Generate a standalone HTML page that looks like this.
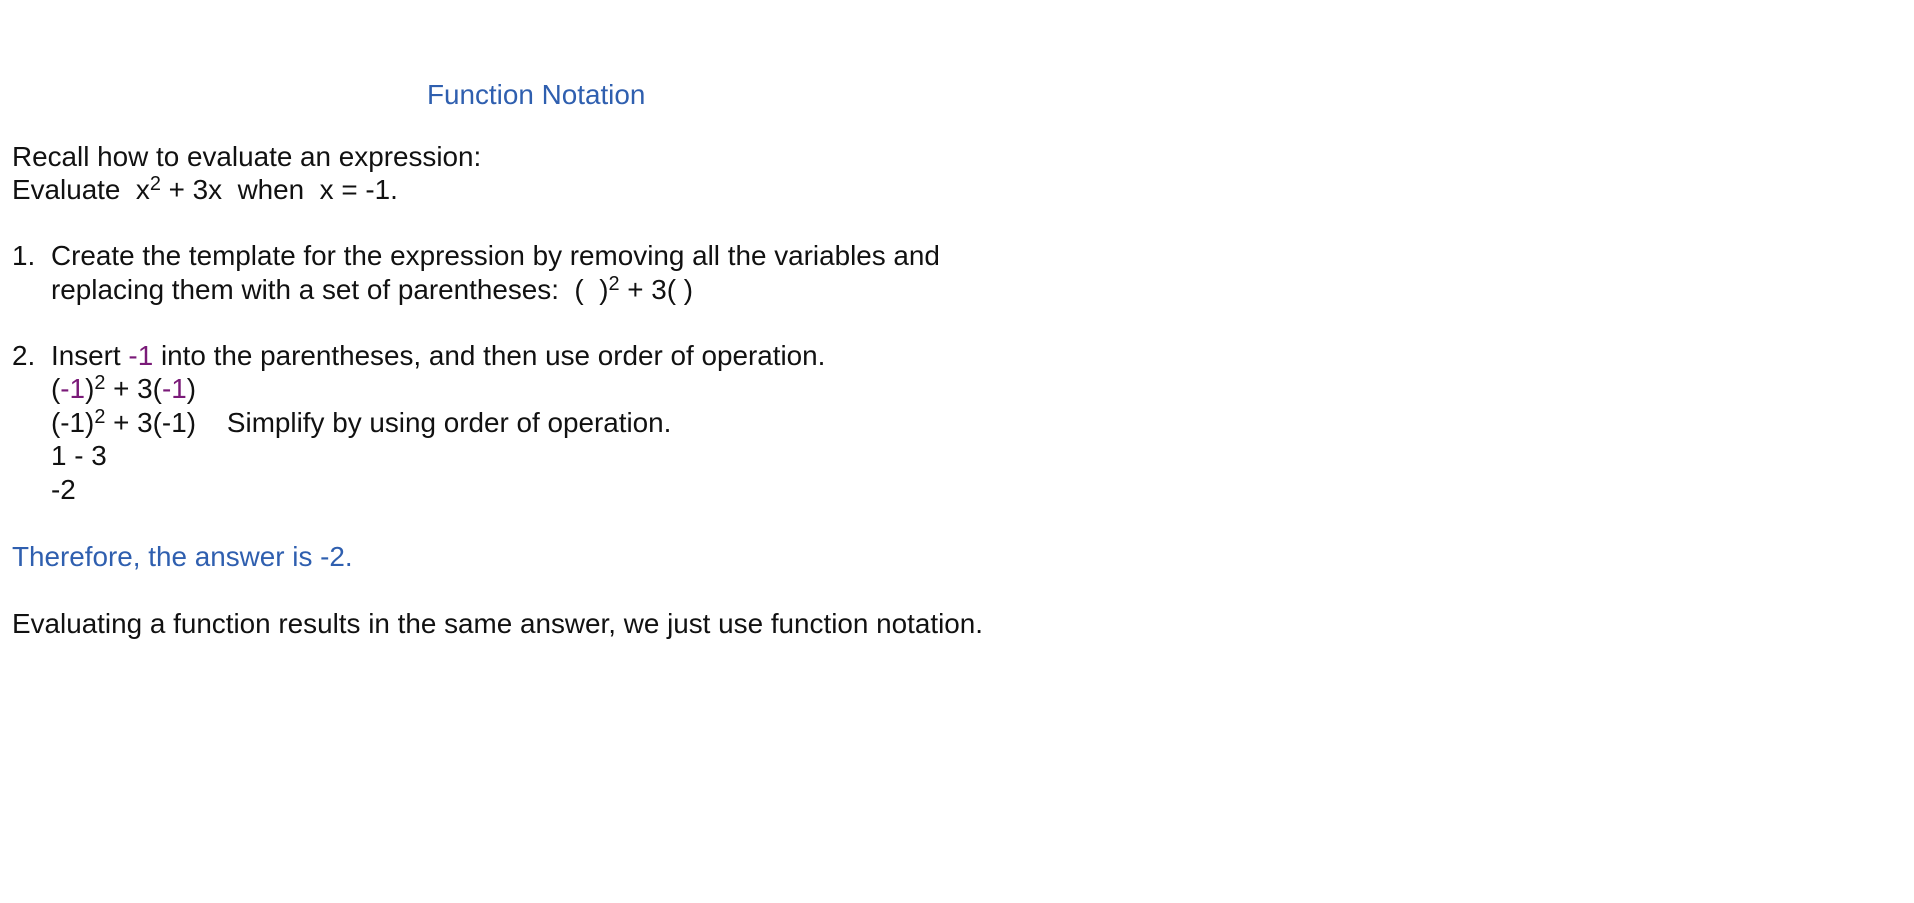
<!DOCTYPE html>
<html><head><meta charset="utf-8"><style>
html,body{margin:0;padding:0;background:#fff;width:1914px;height:903px;overflow:hidden}
.l{position:absolute;white-space:pre;font-family:"Liberation Sans",Arial,sans-serif;font-size:28px;line-height:34px;color:#111;transform:scaleX(0.995);transform-origin:0 0}
.b{color:#2f5faf}
.p{color:#7a1a78}
sup{font-size:20px;vertical-align:0;position:relative;top:-9px}
</style></head><body>
<div class="l b" style="left:427px;top:78px">Function Notation</div>
<div class="l" style="left:12px;top:140px">Recall how to evaluate an expression:</div>
<div class="l" style="left:12px;top:173px">Evaluate  x<sup>2</sup> + 3x  when  x = -1.</div>
<div class="l" style="left:12px;top:239px">1.</div>
<div class="l" style="left:51px;top:239px">Create the template for the expression by removing all the variables and</div>
<div class="l" style="left:51px;top:273px">replacing them with a set of parentheses:  (  )<sup>2</sup> + 3( )</div>
<div class="l" style="left:12px;top:339px">2.</div>
<div class="l" style="left:51px;top:339px">Insert <span class="p">-1</span> into the parentheses, and then use order of operation.</div>
<div class="l" style="left:51px;top:372px">(<span class="p">-1</span>)<sup>2</sup> + 3(<span class="p">-1</span>)</div>
<div class="l" style="left:51px;top:406px">(-1)<sup>2</sup> + 3(-1)    Simplify by using order of operation.</div>
<div class="l" style="left:51px;top:439px">1 - 3</div>
<div class="l" style="left:51px;top:473px">-2</div>
<div class="l b" style="left:12px;top:540px">Therefore, the answer is -2.</div>
<div class="l" style="left:12px;top:607px">Evaluating a function results in the same answer, we just use function notation.</div>
</body></html>
